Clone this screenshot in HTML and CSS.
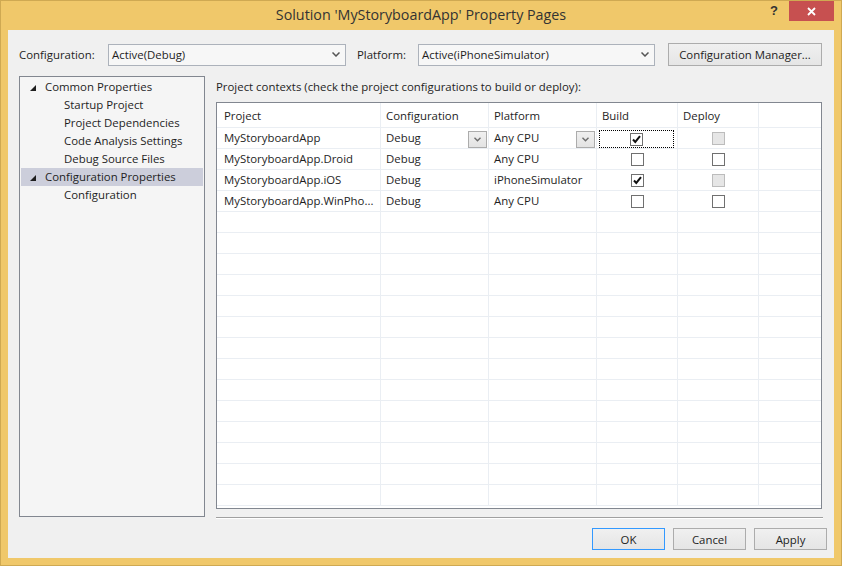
FILE: index.html
```html
<!DOCTYPE html>
<html>
<head>
<meta charset="utf-8">
<title>Property Pages</title>
<link rel="stylesheet" href="styles.css">
</head>
<body>
<div class="window">
  <div class="titlebar">
    <div class="tb-spacer"></div>
    <div class="title">Solution 'MyStoryboardApp' Property Pages</div>
    <div class="caption">
      <span class="help">?</span>
      <span class="close"><svg width="9" height="9" viewBox="0 0 9 9"><path d="M1 1 L8 8 M8 1 L1 8" stroke="#fff" stroke-width="1.8" fill="none"/></svg></span>
    </div>
  </div>
  <div class="content">
    <div class="toprow">
      <span class="lbl lbl-config">Configuration:</span>
      <div class="combo combo-config"><span class="combo-text">Active(Debug)</span><svg class="chev" width="8" height="5" viewBox="0 0 8 5"><path d="M0.5 0.5 L4 4 L7.5 0.5" stroke="#555" stroke-width="1.5" fill="none"/></svg></div>
      <span class="lbl lbl-platform">Platform:</span>
      <div class="combo combo-platform"><span class="combo-text">Active(iPhoneSimulator)</span><svg class="chev" width="8" height="5" viewBox="0 0 8 5"><path d="M0.5 0.5 L4 4 L7.5 0.5" stroke="#555" stroke-width="1.5" fill="none"/></svg></div>
      <button class="btn btn-cm">Configuration Manager...</button>
    </div>
    <div class="main">
      <div class="tree">
        <div class="node lvl0"><svg class="tri" width="6" height="6" viewBox="0 0 6 6"><polygon points="6,0 6,6 0,6" fill="#1e1e1e"/></svg><span>Common Properties</span></div>
        <div class="node lvl1">Startup Project</div>
        <div class="node lvl1">Project Dependencies</div>
        <div class="node lvl1">Code Analysis Settings</div>
        <div class="node lvl1">Debug Source Files</div>
        <div class="node lvl0 selected"><svg class="tri" width="6" height="6" viewBox="0 0 6 6"><polygon points="6,0 6,6 0,6" fill="#1e1e1e"/></svg><span>Configuration Properties</span></div>
        <div class="node lvl1">Configuration</div>
      </div>
      <div class="rightcol">
        <div class="ctx-label">Project contexts (check the project configurations to build or deploy):</div>
        <div class="grid">
          <div class="row header">
            <div class="cell c1">Project</div>
            <div class="cell c2">Configuration</div>
            <div class="cell c3">Platform</div>
            <div class="cell c4">Build</div>
            <div class="cell c5">Deploy</div>
            <div class="cell c6"></div>
          </div>
          <div class="row">
            <div class="cell c1">MyStoryboardApp</div>
            <div class="cell c2 has-dd"><span>Debug</span><span class="dd"><svg width="7" height="5" viewBox="0 0 7 5"><path d="M0.5 0.8 L3.5 3.8 L6.5 0.8" stroke="#6d6d6d" stroke-width="1.4" fill="none"/></svg></span></div>
            <div class="cell c3 has-dd"><span>Any CPU</span><span class="dd"><svg width="7" height="5" viewBox="0 0 7 5"><path d="M0.5 0.8 L3.5 3.8 L6.5 0.8" stroke="#6d6d6d" stroke-width="1.4" fill="none"/></svg></span></div>
            <div class="cell c4 center"><div class="focus"><span class="cb"><svg width="11" height="11" viewBox="0 0 11 11"><path d="M2 5.5 L4.3 8 L9 2.2" stroke="#111" stroke-width="2" fill="none"/></svg></span></div></div>
            <div class="cell c5 center"><span class="cb disabled"></span></div>
            <div class="cell c6"></div>
          </div>
          <div class="row">
            <div class="cell c1">MyStoryboardApp.Droid</div>
            <div class="cell c2">Debug</div>
            <div class="cell c3">Any CPU</div>
            <div class="cell c4 center"><span class="cb"></span></div>
            <div class="cell c5 center"><span class="cb"></span></div>
            <div class="cell c6"></div>
          </div>
          <div class="row">
            <div class="cell c1">MyStoryboardApp.iOS</div>
            <div class="cell c2">Debug</div>
            <div class="cell c3">iPhoneSimulator</div>
            <div class="cell c4 center"><span class="cb"><svg width="11" height="11" viewBox="0 0 11 11"><path d="M2 5.5 L4.3 8 L9 2.2" stroke="#111" stroke-width="2" fill="none"/></svg></span></div>
            <div class="cell c5 center"><span class="cb disabled"></span></div>
            <div class="cell c6"></div>
          </div>
          <div class="row">
            <div class="cell c1">MyStoryboardApp.WinPho...</div>
            <div class="cell c2">Debug</div>
            <div class="cell c3">Any CPU</div>
            <div class="cell c4 center"><span class="cb"></span></div>
            <div class="cell c5 center"><span class="cb"></span></div>
            <div class="cell c6"></div>
          </div>
          <div class="row empty"><div class="cell c1"></div><div class="cell c2"></div><div class="cell c3"></div><div class="cell c4"></div><div class="cell c5"></div><div class="cell c6"></div></div>
          <div class="row empty"><div class="cell c1"></div><div class="cell c2"></div><div class="cell c3"></div><div class="cell c4"></div><div class="cell c5"></div><div class="cell c6"></div></div>
          <div class="row empty"><div class="cell c1"></div><div class="cell c2"></div><div class="cell c3"></div><div class="cell c4"></div><div class="cell c5"></div><div class="cell c6"></div></div>
          <div class="row empty"><div class="cell c1"></div><div class="cell c2"></div><div class="cell c3"></div><div class="cell c4"></div><div class="cell c5"></div><div class="cell c6"></div></div>
          <div class="row empty"><div class="cell c1"></div><div class="cell c2"></div><div class="cell c3"></div><div class="cell c4"></div><div class="cell c5"></div><div class="cell c6"></div></div>
          <div class="row empty"><div class="cell c1"></div><div class="cell c2"></div><div class="cell c3"></div><div class="cell c4"></div><div class="cell c5"></div><div class="cell c6"></div></div>
          <div class="row empty"><div class="cell c1"></div><div class="cell c2"></div><div class="cell c3"></div><div class="cell c4"></div><div class="cell c5"></div><div class="cell c6"></div></div>
          <div class="row empty"><div class="cell c1"></div><div class="cell c2"></div><div class="cell c3"></div><div class="cell c4"></div><div class="cell c5"></div><div class="cell c6"></div></div>
          <div class="row empty"><div class="cell c1"></div><div class="cell c2"></div><div class="cell c3"></div><div class="cell c4"></div><div class="cell c5"></div><div class="cell c6"></div></div>
          <div class="row empty"><div class="cell c1"></div><div class="cell c2"></div><div class="cell c3"></div><div class="cell c4"></div><div class="cell c5"></div><div class="cell c6"></div></div>
          <div class="row empty"><div class="cell c1"></div><div class="cell c2"></div><div class="cell c3"></div><div class="cell c4"></div><div class="cell c5"></div><div class="cell c6"></div></div>
          <div class="row empty"><div class="cell c1"></div><div class="cell c2"></div><div class="cell c3"></div><div class="cell c4"></div><div class="cell c5"></div><div class="cell c6"></div></div>
          <div class="row empty"><div class="cell c1"></div><div class="cell c2"></div><div class="cell c3"></div><div class="cell c4"></div><div class="cell c5"></div><div class="cell c6"></div></div>
          <div class="row empty"><div class="cell c1"></div><div class="cell c2"></div><div class="cell c3"></div><div class="cell c4"></div><div class="cell c5"></div><div class="cell c6"></div></div>
        </div>
        <div class="sep"></div>
      </div>
    </div>
    <div class="bottom">
      <button class="btn btn-dlg btn-ok">OK</button>
      <button class="btn btn-dlg">Cancel</button>
      <button class="btn btn-dlg">Apply</button>
    </div>
  </div>
</div>
</body>
</html>
```
FILE: styles.css
```css
* { box-sizing: border-box; }
html, body { margin: 0; padding: 0; }
body {
  width: 842px;
  height: 566px;
  overflow: hidden;
  font-family: "Open Sans", "Noto Sans", sans-serif;
  font-size: 11.4px;
  color: #1e1e1e;
}
.window {
  width: 842px;
  height: 566px;
  background: #f0c86a;
  border: 1px solid #cfa952;
  padding: 0 7px 7px 7px;
  display: flex;
  flex-direction: column;
}
.titlebar {
  height: 29px;
  display: grid;
  grid-template-columns: 1fr auto 1fr;
  align-items: start;
  margin: 0 -7px;
}
.title {
  font-size: 14.3px;
  color: #333;
  line-height: 16px;
  padding-top: 6px;
  white-space: nowrap;
}
.caption {
  justify-self: end;
  display: flex;
  align-items: flex-start;
  padding-right: 7px;
}
.help {
  font-family: "Liberation Sans", sans-serif;
  font-weight: bold;
  font-size: 13px;
  color: #333;
  line-height: 14px;
  padding-top: 3px;
  margin-right: 11px;
}
.close {
  width: 45px;
  height: 20px;
  background: #c75050;
  display: flex;
  align-items: center;
  justify-content: center;
}
.content {
  flex: 1;
  background: #f0f0f0;
  padding: 13px 12px 8px 11px;
  display: flex;
  flex-direction: column;
}
.toprow {
  height: 23px;
  display: flex;
  align-items: center;
}
.lbl { white-space: nowrap; line-height: 16px; }
.lbl-config { width: 89px; }
.lbl-platform { width: 61px; margin-left: 11px; }
.combo {
  height: 22px;
  border: 1px solid #acb2bb;
  background: #f7f7f7;
  display: flex;
  align-items: center;
  padding: 0 5px 0 3px;
}
.combo-text { flex: 1; white-space: nowrap; }
.combo-config { width: 238px; }
.combo-platform { width: 237px; }
.btn {
  font-family: inherit;
  font-size: 11.4px;
  color: #1e1e1e;
  border: 1px solid #acacac;
  background: linear-gradient(#f0f0f0, #e5e5e5);
  padding: 0;
  margin: 0;
}
.btn-cm { width: 154px; height: 23px; margin-left: 13px; }
.main {
  margin-top: 10px;
  height: 443px;
  display: flex;
  gap: 11px;
  align-items: flex-start;
}
.tree {
  width: 186px;
  height: 441px;
  border: 1px solid #828790;
  background: #f5f5f5;
  padding: 1px 1px 0 1px;
}
.node {
  height: 18px;
  line-height: 18px;
  white-space: nowrap;
  display: flex;
  align-items: center;
}
.lvl0 { padding-left: 9px; }
.lvl0 .tri { margin-right: 9px; margin-top: 2px; }
.lvl1 { padding-left: 43px; }
.selected { background: #cccedb; }
.rightcol {
  width: 606px;
  display: flex;
  flex-direction: column;
}
.ctx-label {
  height: 26px;
  line-height: 16px;
  padding-top: 3px;
  white-space: nowrap;
}
.grid {
  height: 407px;
  border: 1px solid #828790;
  background: #fff;
  overflow: hidden;
}
.row {
  display: grid;
  grid-template-columns: 164px 108px 108px 81px 81px 1fr;
  height: 21px;
  border-bottom: 1px solid #eaeef3;
}
.row.header { height: 25px; }
.cell {
  border-right: 1px solid #eaeef3;
  padding-left: 5px;
  display: flex;
  align-items: center;
  white-space: nowrap;
  overflow: hidden;
  line-height: 16px;
}
.header .cell { padding-top: 2px; }
.cell.c1 { padding-left: 7px; }
.cell.c6 { border-right: none; }
.has-dd { justify-content: space-between; padding-right: 1px; }
.dd {
  width: 19px;
  height: 17px;
  margin-top: 2px;
  border: 1px solid #acacac;
  background: linear-gradient(#f0f0f0, #e3e3e3);
  display: flex;
  align-items: center;
  justify-content: center;
}
.center { justify-content: center; padding-left: 0; }
.focus {
  flex: 1;
  align-self: stretch;
  margin: 2px 3px 0 2px;
  border: 1px dotted #000;
  display: flex;
  align-items: center;
  justify-content: center;
}
.cb {
  width: 13px;
  height: 13px;
  border: 1px solid #707070;
  background: #fff;
  display: flex;
  align-items: center;
  justify-content: center;
}
.cb.disabled { background: #e6e6e6; border-color: #bcbcbc; }
.sep {
  margin-top: 8px;
  margin-right: -1px;
  height: 2px;
  border-top: 1px solid #a0a0a0;
  border-bottom: 1px solid #fff;
}
.bottom {
  margin-top: 9px;
  margin-right: -5px;
  display: flex;
  justify-content: flex-end;
  gap: 8px;
}
.btn-dlg { width: 73px; height: 22px; }
.btn-ok { border-color: #3399ff; }
```
